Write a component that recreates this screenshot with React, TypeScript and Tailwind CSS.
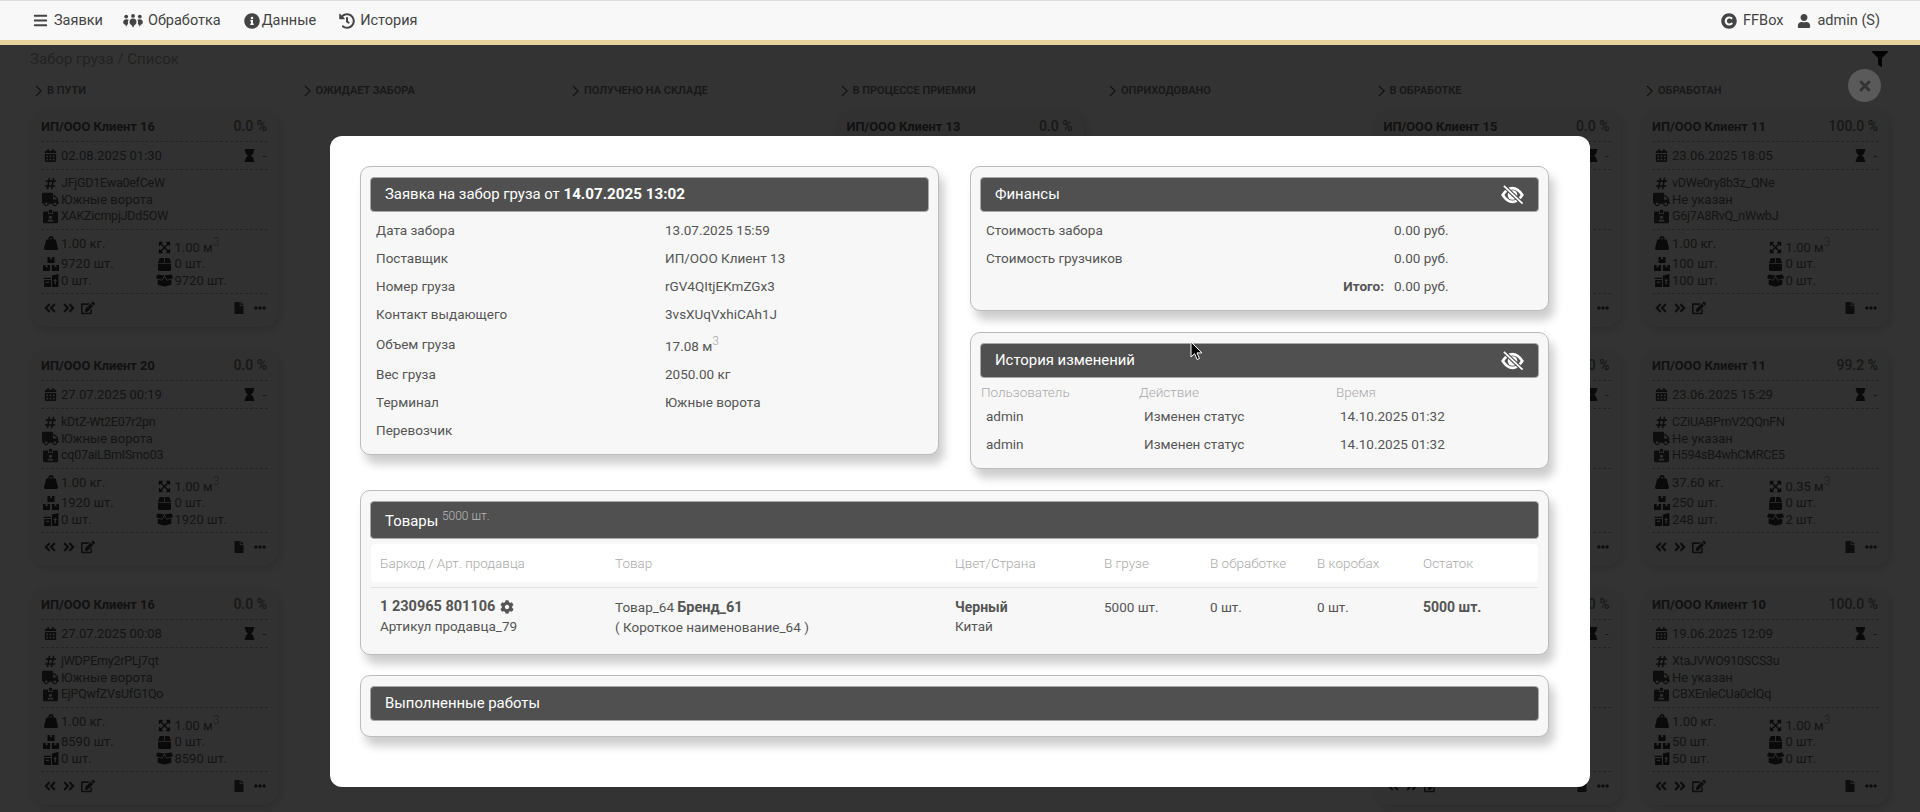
import type { ReactNode } from "react";
import {
  FaAngleDoubleLeft,
  FaAngleDoubleRight,
  FaBars,
  FaBox,
  FaBoxes,
  FaBoxOpen,
  FaCalendarAlt,
  FaCog,
  FaCopyright,
  FaEdit,
  FaEllipsisH,
  FaExpandArrowsAlt,
  FaFile,
  FaFilter,
  FaHashtag,
  FaHistory,
  FaHourglass,
  FaIdCardAlt,
  FaInfoCircle,
  FaTimes,
  FaTruck,
  FaUser,
  FaWeightHanging,
} from "react-icons/fa";

type Order = {
  client: string;
  percent: string;
  date: string;
  code: string;
  terminal: string;
  contact: string;
  weight: string;
  volume: string;
  total: string;
  packed: string;
  boxed: string;
  rest: string;
};

const col1: Order[] = [
  { client: "ИП/ООО Клиент 16", percent: "0.0 %", date: "02.08.2025 01:30", code: "JFjGD1Ewa0efCeW", terminal: "Южные ворота", contact: "XAKZicmpjJDd5OW", weight: "1.00", volume: "1.00", total: "9720", packed: "0", boxed: "0", rest: "9720" },
  { client: "ИП/ООО Клиент 20", percent: "0.0 %", date: "27.07.2025 00:19", code: "kDtZ-Wt2E07r2pn", terminal: "Южные ворота", contact: "cq07aiLBmISmo03", weight: "1.00", volume: "1.00", total: "1920", packed: "0", boxed: "0", rest: "1920" },
  { client: "ИП/ООО Клиент 16", percent: "0.0 %", date: "27.07.2025 00:08", code: "jWDPEmy2rPLj7qt", terminal: "Южные ворота", contact: "EjPQwfZVsUfG1Qo", weight: "1.00", volume: "1.00", total: "8590", packed: "0", boxed: "0", rest: "8590" },
];

const col4: Order[] = [
  { client: "ИП/ООО Клиент 13", percent: "0.0 %", date: "13.07.2025 15:59", code: "rGV4QItjEKmZGx3", terminal: "Южные ворота", contact: "3vsXUqVxhiCAh1J", weight: "2050.00", volume: "17.08", total: "5000", packed: "0", boxed: "0", rest: "5000" },
];

const col6: Order[] = [
  { client: "ИП/ООО Клиент 15", percent: "0.0 %", date: "10.07.2025 10:12", code: "", terminal: "", contact: "", weight: "1.00", volume: "1.00", total: "100", packed: "0", boxed: "0", rest: "100" },
  { client: "ИП/ООО Клиент 15", percent: "0.0 %", date: "09.07.2025 11:40", code: "", terminal: "", contact: "", weight: "1.00", volume: "1.00", total: "100", packed: "0", boxed: "0", rest: "100" },
  { client: "ИП/ООО Клиент 15", percent: "0.0 %", date: "08.07.2025 09:21", code: "", terminal: "", contact: "", weight: "1.00", volume: "1.00", total: "100", packed: "0", boxed: "0", rest: "100" },
];

const col7: Order[] = [
  { client: "ИП/ООО Клиент 11", percent: "100.0 %", date: "23.06.2025 18:05", code: "vDWe0ry8b3z_QNe", terminal: "Не указан", contact: "G6j7A8RvQ_nWwbJ", weight: "1.00", volume: "1.00", total: "100", packed: "0", boxed: "100", rest: "0" },
  { client: "ИП/ООО Клиент 11", percent: "99.2 %", date: "23.06.2025 15:29", code: "CZiUABPmV2QQnFN", terminal: "Не указан", contact: "H594sB4whCMRCE5", weight: "37.60", volume: "0.35", total: "250", packed: "0", boxed: "248", rest: "2" },
  { client: "ИП/ООО Клиент 10", percent: "100.0 %", date: "19.06.2025 12:09", code: "XtaJVWO910SCS3u", terminal: "Не указан", contact: "CBXEnleCUa0clQq", weight: "1.00", volume: "1.00", total: "50", packed: "0", boxed: "50", rest: "0" },
];

const columns: { title: string; orders: Order[] }[] = [
  { title: "В пути", orders: col1 },
  { title: "Ожидает забора", orders: [] },
  { title: "Получено на складе", orders: [] },
  { title: "В процессе приемки", orders: col4 },
  { title: "Оприходовано", orders: [] },
  { title: "В обработке", orders: col6 },
  { title: "Обработан", orders: col7 },
];

function BoxArrow() {
  return (
    <svg viewBox="0 0 16 14" className="h-[13px] w-[16px] shrink-0" fill="currentColor">
      <path d="M0 4h8v1.5H0zM0.6 6.5h7.4V14H0.6zM2.5 8.4v1.2h3.5V8.4z" fillRule="evenodd" />
      <path d="M9 1.5 16 0v14H9zM12.5 5l-2 2.6h1.3V11h1.4V7.6h1.3z" fillRule="evenodd" />
    </svg>
  );
}

function PeopleIcon() {
  return (
    <svg viewBox="0 0 20 14" className="h-[14px] w-[20px]" fill="currentColor">
      <circle cx="3.2" cy="2.6" r="1.9" />
      <circle cx="10" cy="1.9" r="1.9" />
      <circle cx="16.8" cy="2.6" r="1.9" />
      <path d="M3.2 5.2C1.2 5.2.2 6.6.2 8.2c0 1.5 1.2 2.3 2.2 2.6l.8 2 .9-2c.5-.2.8-.4 1.1-.7-.5-1.4-.4-3.2.5-4.3-.6-.4-1.5-.6-2.5-.6z" />
      <path d="M16.8 5.2c2 0 3 1.4 3 3 0 1.5-1.2 2.3-2.2 2.6l-.8 2-.9-2c-.5-.2-.8-.4-1.1-.7.5-1.4.4-3.2-.5-4.3.6-.4 1.5-.6 2.5-.6z" />
      <path d="M10 4.5c-2.3 0-3.5 1.6-3.5 3.6 0 1.8 1.2 2.8 2.2 3.1l1.3 2.6 1.3-2.6c1-.3 2.2-1.3 2.2-3.1 0-2-1.2-3.6-3.5-3.6z" />
    </svg>
  );
}

function EyeOff() {
  return (
    <svg viewBox="0 0 24 20" className="h-[20px] w-[23px]" fill="none">
      <path
        d="M1.8 10C5.5 4.2 9.5 2.8 12 2.8S18.5 4.2 22.2 10C18.5 15.8 14.5 17.2 12 17.2S5.5 15.8 1.8 10Z"
        stroke="#fff"
        strokeWidth="2.8"
      />
      <circle cx="12" cy="10" r="5" fill="#fff" />
      <path d="M3 0.5 22.5 19" stroke="#505050" strokeWidth="4.2" />
      <path d="M3 0.5 22.5 19" stroke="#fff" strokeWidth="1.8" />
    </svg>
  );
}

function IconCell({ children }: { children: ReactNode }) {
  return <span className="flex w-[19px] shrink-0 justify-center">{children}</span>;
}

function OrderCard({ order }: { order: Order }) {
  return (
    <div className="h-[217px] w-[247px] rounded-[15px] bg-[#f4f4f4] px-[10px] text-[13px] text-[#666] shadow-[2px_3px_8px_rgba(0,0,0,0.16)]">
      <div className="flex h-[32px] items-center justify-between border-b border-dashed border-[#b0b0b0] pt-[2px]">
        <span className="text-[12.8px] font-bold text-[#555]">{order.client}</span>
        <span className="pr-px text-[14px] font-medium text-[#777]">{order.percent}</span>
      </div>
      <div className="flex h-[28px] items-center justify-between border-b border-dashed border-[#b0b0b0]">
        <span className="flex items-center gap-[1px]">
          <IconCell>
            <FaCalendarAlt className="size-[13px] text-[#444]" />
          </IconCell>
          <span>{order.date}</span>
        </span>
        <span className="flex items-center gap-[6px] pr-[2px]">
          <FaHourglass className="size-[13px] text-[#333]" />
          <span>-</span>
        </span>
      </div>
      <div className="flex h-[60px] flex-col justify-center border-b border-dashed border-[#b0b0b0] leading-[16px]">
        <span className="flex items-center gap-[1px]">
          <IconCell>
            <FaHashtag className="size-[13px] text-[#444]" />
          </IconCell>
          <span className="text-[12.5px] tracking-[-0.02em]">{order.code}</span>
        </span>
        <span className="flex items-center gap-[1px]">
          <IconCell>
            <FaTruck className="size-[17px] text-[#444]" />
          </IconCell>
          {order.terminal}
        </span>
        <span className="flex items-center gap-[1px]">
          <IconCell>
            <FaIdCardAlt className="size-[15px] text-[#444]" />
          </IconCell>
          <span className="text-[12.5px] tracking-[-0.02em]">{order.contact}</span>
        </span>
      </div>
      <div className="grid h-[64px] grid-cols-2 content-center border-b border-dashed border-[#b0b0b0] leading-[16px] text-[#666]">
        <span className="flex h-[22px] items-start gap-[1px] pt-[2px]">
          <IconCell>
            <FaWeightHanging className="size-[14px] text-[#333]" />
          </IconCell>
          {order.weight} кг.
        </span>
        <span className="flex h-[22px] items-end gap-[1px]">
          <IconCell>
            <FaExpandArrowsAlt className="mb-[2px] size-[13px] text-[#333]" />
          </IconCell>
          <span>
            {order.volume} м<sup className="text-[12px] font-light text-[#999]">3</sup>
          </span>
        </span>
        <span className="flex items-center gap-[1px]">
          <IconCell>
            <FaBoxes className="size-[16px] text-[#333]" />
          </IconCell>
          {order.total} шт.
        </span>
        <span className="flex items-center gap-[1px]">
          <IconCell>
            <FaBox className="size-[13px] text-[#333]" />
          </IconCell>
          {order.packed} шт.
        </span>
        <span className="flex items-center gap-[1px]">
          <IconCell>
            <span className="text-[#333]">
              <BoxArrow />
            </span>
          </IconCell>
          {order.boxed} шт.
        </span>
        <span className="flex items-center gap-[1px]">
          <IconCell>
            <FaBoxOpen className="size-[17px] text-[#333]" />
          </IconCell>
          {order.rest} шт.
        </span>
      </div>
      <div className="flex h-[32px] items-center justify-between pb-[5px] text-[#444]">
        <span className="flex items-center gap-[5px] pl-[2px]">
          <FaAngleDoubleLeft className="size-[14px]" />
          <FaAngleDoubleRight className="size-[14px]" />
          <FaEdit className="size-[14px]" />
        </span>
        <span className="flex items-center gap-[9px] pr-[2px]">
          <FaFile className="size-[12px]" />
          <FaEllipsisH className="size-[12px]" />
        </span>
      </div>
    </div>
  );
}

function Column({ title, orders }: { title: string; orders: Order[] }) {
  return (
    <div className="w-[247px] shrink-0">
      <div className="flex h-[20px] items-center gap-[4px] pl-[3px] text-[11px] font-semibold uppercase text-[#777]">
        <svg viewBox="0 0 8 14" className="h-[12px] w-[9px]" fill="none" stroke="#555" strokeWidth="1.5">
          <path d="M1 1l6 6-6 6" />
        </svg>
        <span>{title}</span>
      </div>
      <div className="mt-[9px] flex flex-col gap-[22px]">
        {orders.map((order, i) => (
          <OrderCard key={i} order={order} />
        ))}
      </div>
    </div>
  );
}

function NavItem({ icon, label, className = "gap-[6px]" }: { icon: ReactNode; label: string; className?: string }) {
  return (
    <span className={`flex items-center text-[14.5px] text-[#444] ${className}`}>
      {icon}
      <span>{label}</span>
    </span>
  );
}

function Panel({ className = "", children }: { className?: string; children: ReactNode }) {
  return (
    <section
      className={`rounded-[10px] border border-[#bcbcbc] bg-[#f7f7f7] px-[10px] pt-[10px] shadow-[5px_9px_10px_rgba(0,0,0,0.2)] ${className}`}
    >
      {children}
    </section>
  );
}

function PanelHead({ children, hide, className = "h-[35px]" }: { children: ReactNode; hide?: boolean; className?: string }) {
  return (
    <div className={`-mx-px flex items-center justify-between rounded-[4px] border border-[#a8a8a8] bg-[#505050] pl-[14px] pr-[14px] text-[14.9px] text-white ${className}`}>
      <div>{children}</div>
      {hide && <EyeOff />}
    </div>
  );
}

const cargo: [string, ReactNode][] = [
  ["Дата забора", "13.07.2025 15:59"],
  ["Поставщик", "ИП/ООО Клиент 13"],
  ["Номер груза", "rGV4QItjEKmZGx3"],
  ["Контакт выдающего", "3vsXUqVxhiCAh1J"],
  [
    "Объем груза",
    <span key="v" className="relative top-[2px]">
      17.08 м<sup className="text-[12px] font-light text-[#aaa]">3</sup>
    </span>,
  ],
  ["Вес груза", "2050.00 кг"],
  ["Терминал", "Южные ворота"],
  ["Перевозчик", ""],
];

const goodsCols = "grid grid-cols-[235px_340px_149px_106px_107px_106px_1fr]";

function Modal() {
  return (
    <div className="ml-[330px] mt-[136px] h-[651px] w-[1260px] rounded-[12px] bg-white pl-[30px] pr-[41px] pt-[30px] text-[13.5px] text-[#555]">
      <div className="flex items-start gap-[31px]">
        <Panel className="h-[289px] w-[579px]">
          <PanelHead>
            Заявка на забор груза от <b className="text-[15.2px] font-bold">14.07.2025 13:02</b>
          </PanelHead>
          <div className="mt-[4px] pl-[5px]">
            {cargo.map(([label, value]) => (
              <div
                key={label}
                className={`grid grid-cols-[289px_1fr] items-center ${label === "Объем груза" ? "h-[32px]" : "h-[28px]"}`}
              >
                <span>{label}</span>
                <span>{value}</span>
              </div>
            ))}
          </div>
        </Panel>
        <div className="flex w-[579px] flex-col gap-[21px]">
          <Panel className="h-[145px]">
            <PanelHead hide>Финансы</PanelHead>
            <div className="mt-[4px] pl-[5px]">
              <div className="grid h-[28px] grid-cols-[408px_1fr] items-center">
                <span>Стоимость забора</span>
                <span>0.00 руб.</span>
              </div>
              <div className="grid h-[28px] grid-cols-[408px_1fr] items-center">
                <span>Стоимость грузчиков</span>
                <span>0.00 руб.</span>
              </div>
              <div className="grid h-[28px] grid-cols-[408px_1fr] items-center">
                <b className="pr-[10px] text-right font-bold">Итого:</b>
                <span>0.00 руб.</span>
              </div>
            </div>
          </Panel>
          <Panel className="h-[137px]">
            <PanelHead hide>История изменений</PanelHead>
            <div className="grid grid-cols-[158px_197px_1fr] pt-[5px] font-light leading-[19px] text-[#aaa]">
              <span>Пользователь</span>
              <span>Действие</span>
              <span>Время</span>
            </div>
            {[0, 1].map((i) => (
              <div key={i} className="grid h-[28px] grid-cols-[158px_197px_1fr] items-center pl-[5px]">
                <span>admin</span>
                <span>Изменен статус</span>
                <span className="-ml-px">14.10.2025 01:32</span>
              </div>
            ))}
          </Panel>
        </div>
      </div>
      <Panel className="mt-[21px] h-[165px]">
        <PanelHead className="h-[38px] pt-[2px]">
          Товары <sup className="text-[12px] font-light text-[#bbb]">5000 шт.</sup>
        </PanelHead>
        <div className={`${goodsCols} mt-[5px] h-[38px] items-center rounded-[4px] bg-white pl-[9px] font-light text-[#aaa]`}>
          <span>Баркод / Арт. продавца</span>
          <span>Товар</span>
          <span>Цвет/Страна</span>
          <span>В грузе</span>
          <span>В обработке</span>
          <span>В коробах</span>
          <span>Остаток</span>
        </div>
        <div className={`${goodsCols} mt-[5px] border-t border-[#e2e2e2] pl-[9px] pt-[10px] leading-[18.5px]`}>
          <div>
            <div className="flex items-center gap-[5px] text-[14.5px] font-bold">
              1 230965 801106 <FaCog className="size-[14px]" />
            </div>
            <div>Артикул продавца_79</div>
          </div>
          <div>
            <div>
              Товар_64 <b className="text-[14.5px] font-bold">Бренд_61</b>
            </div>
            <div>( Короткое наименование_64 )</div>
          </div>
          <div>
            <div className="text-[14px] font-bold">Черный</div>
            <div>Китай</div>
          </div>
          <div>5000 шт.</div>
          <div>0 шт.</div>
          <div>0 шт.</div>
          <div className="text-[14px] font-bold">5000 шт.</div>
        </div>
      </Panel>
      <Panel className="mt-[20px] h-[62px]">
        <PanelHead>Выполненные работы</PanelHead>
      </Panel>
    </div>
  );
}

export default function App() {
  return (
    <div className="relative h-screen overflow-hidden bg-white font-['Roboto',sans-serif]">
      <header className="relative z-20 flex h-[45px] items-center justify-between border-b-[5px] border-t border-b-[#e6d29b] border-t-[#dcdcdc] bg-[#f8f8f8] pl-[33px] pr-[40px]">
        <nav className="flex items-center gap-[20px]">
          <NavItem className="gap-[6px]" icon={<FaBars className="size-[15px]" />} label="Заявки" />
          <NavItem className="gap-[5px]" icon={<PeopleIcon />} label="Обработка" />
          <NavItem className="ml-[3px] gap-[2px]" icon={<FaInfoCircle className="size-[16px]" />} label="Данные" />
          <NavItem className="ml-[3px] gap-[5px]" icon={<FaHistory className="size-[16px]" />} label="История" />
        </nav>
        <div className="flex items-center gap-[14px]">
          <NavItem icon={<FaCopyright className="size-[16px]" />} label="FFBox" />
          <NavItem icon={<FaUser className="size-[14px]" />} label="admin (S)" />
        </div>
      </header>
      <main className="pl-[31px]">
        <div className="-ml-px flex h-[29px] items-center justify-between pr-[32px] text-[15px] text-[#aaa]">
          <span>Забор груза / Список</span>
          <FaFilter className="mb-[2px] size-[16px] text-[#111]" />
        </div>
        <div className="mt-[7px] flex gap-[21.5px]">
          {columns.map((column) => (
            <Column key={column.title} title={column.title} orders={column.orders} />
          ))}
        </div>
      </main>
      <div className="absolute inset-0 z-10 bg-black/80">
        <Modal />
        <button className="absolute left-[1848px] top-[69px] flex size-[33px] items-center justify-center rounded-full bg-[#5a5a5a] text-[#333]">
          <FaTimes className="size-[16px]" />
        </button>
      </div>
      <svg viewBox="0 0 13 20" className="absolute left-[1190px] top-[341px] z-30 h-[20px] w-[13px]">
        <path d="M1 1v15l3.6-3.3 2.5 5.8 2.4-1-2.5-5.6H12z" fill="#000" stroke="#fff" strokeWidth="1" />
      </svg>
    </div>
  );
}
